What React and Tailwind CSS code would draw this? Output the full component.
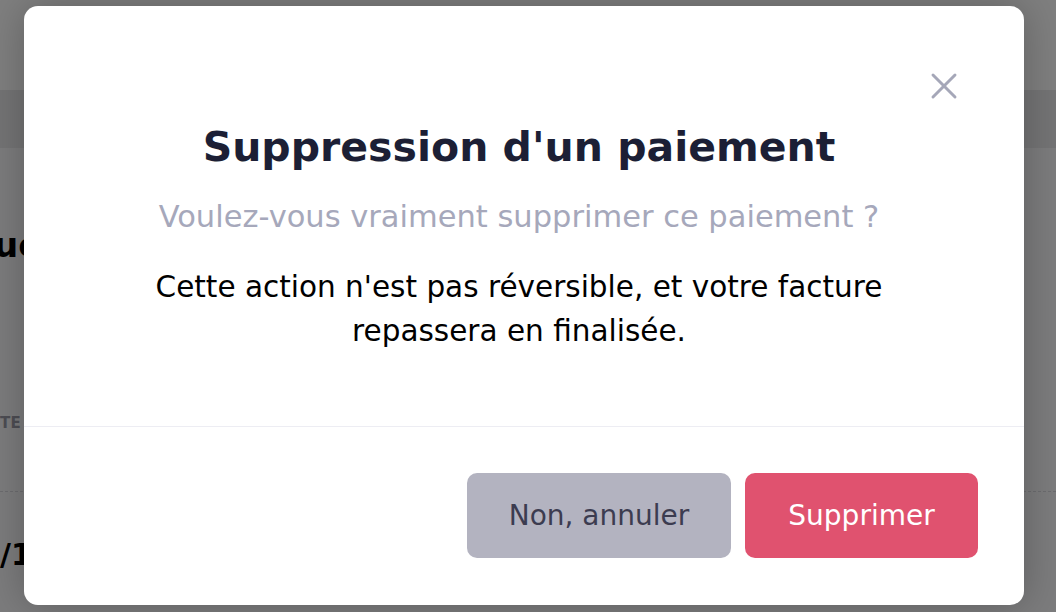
import { X } from "lucide-react";

export default function App() {
  return (
    <div className="relative h-[612px] w-[1056px] overflow-hidden bg-[#f9f9fa] font-['DejaVu_Sans',sans-serif]">
      {/* page behind the dialog */}
      <div className="flex flex-col">
        <div className="h-[90px] bg-white" />
        <div className="h-[58px] bg-[#e8e8ea]" />
        <div className="flex flex-col">
          <div className="mt-[80px] -ml-[6px] text-[34px] font-bold leading-[34px] text-black">ue</div>
          <div className="mt-[150px] text-[15px] font-semibold tracking-wide text-[#9a9aa6]">TE</div>
          <div className="mt-[56px] border-t border-dashed border-[#d8d8de]" />
          <div className="mt-[40px] text-[30px] font-semibold text-black">/1</div>
        </div>
      </div>
      <div className="absolute inset-0 bg-black/50" />

      {/* dialog */}
      <div className="absolute left-[24px] top-[6px] flex h-[599px] w-[1000px] flex-col rounded-[14px] bg-white shadow-[0_0_40px_rgba(0,0,0,0.25)]">
        <button className="absolute right-[58px] top-[58px] text-[#a5a7b8]">
          <X size={44} strokeWidth={1.6} />
        </button>
        <div className="flex h-[421px] flex-col items-center border-b border-[#ededf3] pr-[10px] pt-[117px] text-center">
          <h2 className="text-[41px] font-bold leading-[48px] text-[#1c1f35]">Suppression d'un paiement</h2>
          <p className="mt-[28px] text-[30.5px] leading-[36px] text-[#a6a8bb]">Voulez-vous vraiment supprimer ce paiement ?</p>
          <p className="mt-[30px] w-[790px] text-[29.5px] leading-[44px] text-black">
            Cette action n'est pas réversible, et votre facture repassera en finalisée.
          </p>
        </div>
        <div className="flex justify-end gap-[14px] px-[46px] pt-[46px]">
          <button className="h-[85px] w-[264px] rounded-[10px] bg-[#b3b3c0] text-[28px] text-[#3c3c50]">Non, annuler</button>
          <button className="h-[85px] w-[233px] rounded-[10px] bg-[#e0526f] text-[28px] text-white">Supprimer</button>
        </div>
      </div>
    </div>
  );
}
